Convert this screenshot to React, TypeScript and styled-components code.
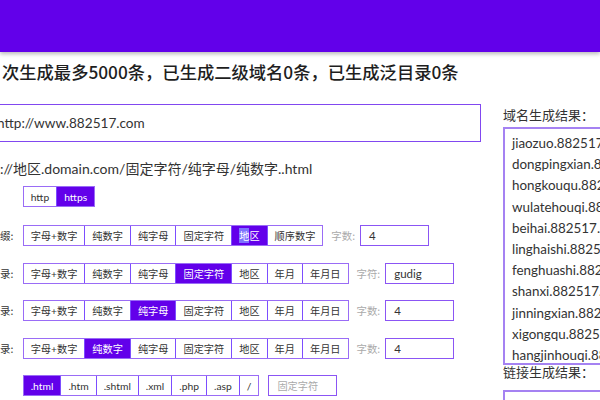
import * as React from "react";
import styled, { createGlobalStyle } from "styled-components";

const GlobalStyle = createGlobalStyle`
	html, body {
		margin: 0;
		padding: 0;
		background: #fff;
		overflow: hidden;
	}
	body {
		width: 600px;
		height: 400px;
		font-family: Lato, "Noto Sans CJK SC", sans-serif;
		color: #333;
	}
`;

const PURPLE = "#6200ea";
const LINE = "#7c4dff";

const Header = styled.header`
	height: 52px;
	background: ${PURPLE};
	box-shadow: 0 2px 4px rgba(0, 0, 0, 0.28);
`;

const Title = styled.h1`
	margin: 7px 0 0;
	padding-left: 2px;
	font-family: "Noto Sans CJK SC", sans-serif;
	font-size: 17.3px;
	font-weight: 500;
	line-height: 26px;
	color: #1e1e1e;
	white-space: nowrap;
`;

const Main = styled.div`
	display: flex;
	gap: 22px;
	margin-top: 19px;
`;

const LeftCol = styled.div`
	flex: none;
	width: 481px;
	display: flex;
	flex-direction: column;
`;

const UrlBox = styled.div`
	height: 38px;
	box-sizing: border-box;
	border: 1.5px solid #8147f0;
	border-left: none;
	display: flex;
	align-items: center;
	font-size: 13.6px;
	color: #333;
	text-indent: -3px;
	white-space: nowrap;
`;

const Preview = styled.div`
	margin-top: 18px;
	font-size: 14px;
	line-height: 18px;
	color: #333;
	white-space: nowrap;
`;

const Rows = styled.div`
	display: flex;
	flex-direction: column;
	gap: 16.5px;
	margin-top: 18px;
`;

const Row = styled.div<{ $top?: number }>`
	display: flex;
	align-items: center;
	height: 21px;
	margin-top: ${(p) => p.$top ?? 0}px;
`;

const RowLabel = styled.span`
	width: 12px;
	margin-right: 10.7px;
	flex: none;
	font-family: "Noto Sans CJK SC", sans-serif;
	font-size: 10.5px;
	color: #333;
	white-space: nowrap;
	text-align: right;
`;

const Group = styled.div`
	display: flex;
	height: 21px;
	box-sizing: border-box;
	border: 1.5px solid #9a6cf6;
	flex: none;
`;

const Seg = styled.span<{ $active?: boolean; $latin?: boolean }>`
	display: flex;
	align-items: center;
	padding: 0 7px;
	border-left: 1px solid ${LINE};
	background: ${(p) => (p.$active ? PURPLE : "#fff")};
	color: ${(p) => (p.$active ? "#fff" : "#333")};
	font-family: ${(p) => (p.$latin ? "Lato" : "Lato, \"Noto Sans CJK SC\"")}, sans-serif;
	font-size: ${(p) => (p.$latin ? "10.3px" : "10.2px")};
	white-space: nowrap;
	&:first-child {
		border-left: none;
	}
`;

const Picked = styled.span`
	background: #7d72ff;
`;

const FieldLabel = styled.span`
	margin: 0 5px 0 8px;
	font-family: "Noto Sans CJK SC", sans-serif;
	font-size: 10.4px;
	color: #aaa;
	white-space: nowrap;
`;

const Field = styled.div<{ $gap?: number; $muted?: boolean }>`
	width: 69px;
	height: 21px;
	box-sizing: border-box;
	margin-left: ${(p) => p.$gap ?? 0}px;
	border: 1.5px solid #8b55f4;
	display: flex;
	align-items: center;
	padding-left: 8px;
	font-family: Lato, "Noto Sans CJK SC", sans-serif;
	font-size: ${(p) => (p.$muted ? "10.2px" : "11.5px")};
	color: ${(p) => (p.$muted ? "#aaa" : "#333")};
`;

const RightCol = styled.div`
	flex: none;
	width: 220px;
	display: flex;
	flex-direction: column;
`;

const PanelLabel = styled.div<{ $top?: number; $bottom?: number }>`
	margin-top: ${(p) => p.$top ?? 0}px;
	margin-bottom: ${(p) => p.$bottom ?? 0}px;
	font-family: "Noto Sans CJK SC", sans-serif;
	font-size: 13px;
	line-height: 14px;
	color: #333;
	white-space: nowrap;
`;

const ResultBox = styled.div<{ $height: number }>`
	height: ${(p) => p.$height}px;
	box-sizing: border-box;
	border: 2px solid #a582f2;
	border-right: none;
	padding: 4px 0 0 7px;
	overflow: hidden;
`;

const ResultLine = styled.div`
	font-size: 13.4px;
	line-height: 21.2px;
	color: #333;
	white-space: nowrap;
`;

const prefixOpts = ["字母+数字", "纯数字", "纯字母", "固定字符", "地区", "顺序数字"];
const dirOpts = ["字母+数字", "纯数字", "纯字母", "固定字符", "地区", "年月", "年月日"];
const extOpts = [".html", ".htm", ".shtml", ".xml", ".php", ".asp", "/"];

const domains = [
	"jiaozuo",
	"dongpingxian",
	"hongkouqu",
	"wulatehouqi",
	"beihai",
	"linghaishi",
	"fenghuashi",
	"shanxi",
	"jinningxian",
	"xigongqu",
	"hangjinhouqi",
];

const DirRow: React.FC<{ label: string; active: string; fieldLabel: string; value: string }> = ({
	label,
	active,
	fieldLabel,
	value,
}) => (
	<Row>
		<RowLabel>{label}</RowLabel>
		<Group>
			{dirOpts.map((o) => (
				<Seg key={o} $active={o === active}>
					{o}
				</Seg>
			))}
		</Group>
		<FieldLabel>{fieldLabel}</FieldLabel>
		<Field>{value}</Field>
	</Row>
);

export default function App() {
	return (
		<>
			<GlobalStyle />
			<Header />
			<Title>次生成最多5000条，已生成二级域名0条，已生成泛目录0条</Title>
			<Main>
				<LeftCol>
					<UrlBox>http://www.882517.com</UrlBox>
					<Preview>://地区.domain.com/固定字符/纯字母/纯数字..html</Preview>
					<Row $top={8}>
						<RowLabel />
						<Group>
							<Seg $latin>http</Seg>
							<Seg $latin $active>
								https
							</Seg>
						</Group>
					</Row>
					<Rows>
						<Row>
							<RowLabel>缀:</RowLabel>
							<Group>
								{prefixOpts.map((o) => (
									<Seg key={o} $active={o === "地区"}>
										{o === "地区" ? (
											<>
												<Picked>地</Picked>区
											</>
										) : (
											o
										)}
									</Seg>
								))}
							</Group>
							<FieldLabel>字数:</FieldLabel>
							<Field>4</Field>
						</Row>
						<DirRow label="录:" active="固定字符" fieldLabel="字符:" value="gudig" />
						<DirRow label="录:" active="纯字母" fieldLabel="字数:" value="4" />
						<DirRow label="录:" active="纯数字" fieldLabel="字数:" value="4" />
						<Row>
							<RowLabel />
							<Group>
								{extOpts.map((o) => (
									<Seg key={o} $latin $active={o === ".html"}>
										{o}
									</Seg>
								))}
							</Group>
							<Field $gap={9} $muted>
								固定字符
							</Field>
						</Row>
					</Rows>
				</LeftCol>
				<RightCol>
					<PanelLabel $top={4} $bottom={5}>
						域名生成结果：
					</PanelLabel>
					<ResultBox $height={238}>
						{domains.map((d) => (
							<ResultLine key={d}>{d}.882517.com</ResultLine>
						))}
					</ResultBox>
					<PanelLabel $top={0} $bottom={11}>
						链接生成结果：
					</PanelLabel>
					<ResultBox $height={60} />
				</RightCol>
			</Main>
		</>
	);
}
